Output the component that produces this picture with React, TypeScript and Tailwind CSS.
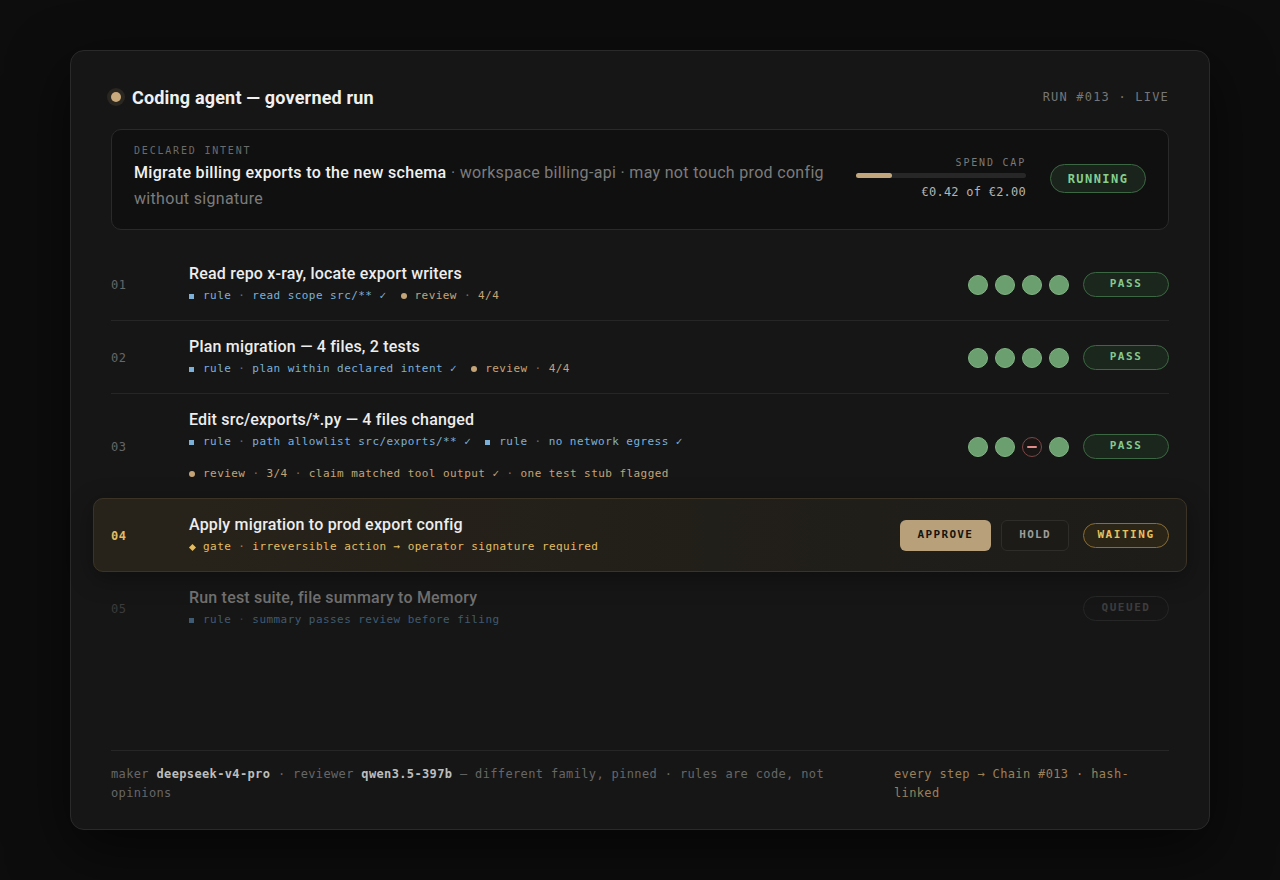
import React from "react";

type Check = "ok" | "flag";
type Tag = { kind: "rule" | "review" | "gate"; label: string; parts: string[] };
type Step = {
  n: string;
  title: string;
  tags: Tag[];
  status: "pass" | "waiting" | "queued";
  checks?: Check[];
};

const mono = "font-['DejaVu_Sans_Mono',monospace]";

const steps: Step[] = [
  {
    n: "01",
    title: "Read repo x-ray, locate export writers",
    tags: [
      { kind: "rule", label: "rule", parts: ["read scope src/** ✓"] },
      { kind: "review", label: "review", parts: ["4/4"] },
    ],
    status: "pass",
    checks: ["ok", "ok", "ok", "ok"],
  },
  {
    n: "02",
    title: "Plan migration — 4 files, 2 tests",
    tags: [
      { kind: "rule", label: "rule", parts: ["plan within declared intent ✓"] },
      { kind: "review", label: "review", parts: ["4/4"] },
    ],
    status: "pass",
    checks: ["ok", "ok", "ok", "ok"],
  },
  {
    n: "03",
    title: "Edit src/exports/*.py — 4 files changed",
    tags: [
      { kind: "rule", label: "rule", parts: ["path allowlist src/exports/** ✓"] },
      { kind: "rule", label: "rule", parts: ["no network egress ✓"] },
      {
        kind: "review",
        label: "review",
        parts: ["3/4", "claim matched tool output ✓", "one test stub flagged"],
      },
    ],
    status: "pass",
    checks: ["ok", "ok", "flag", "ok"],
  },
  {
    n: "04",
    title: "Apply migration to prod export config",
    tags: [
      {
        kind: "gate",
        label: "gate",
        parts: ["irreversible action → operator signature required"],
      },
    ],
    status: "waiting",
  },
  {
    n: "05",
    title: "Run test suite, file summary to Memory",
    tags: [{ kind: "rule", label: "rule", parts: ["summary passes review before filing"] }],
    status: "queued",
  },
];

const TagItem: React.FC<{ tag: Tag; dim?: boolean }> = ({ tag, dim }) => {
  const color =
    tag.kind === "rule"
      ? dim
        ? "text-[#3f5b73]"
        : "text-[#7cb0d8]"
      : tag.kind === "review"
        ? "text-[#c4a476]"
        : "text-[#e4bd62]";
  return (
    <span className={`inline-flex items-center whitespace-nowrap ${color}`}>
      {tag.kind === "rule" && <span className="mr-[9px] inline-block h-[5px] w-[5px] bg-current" />}
      {tag.kind === "review" && (
        <span className="mr-[8px] inline-block h-[6px] w-[6px] rounded-full bg-current" />
      )}
      {tag.kind === "gate" && (
        <span className="mr-[8px] ml-[1px] inline-block h-[5px] w-[5px] rotate-45 bg-current" />
      )}
      <span>{tag.label}</span>
      {tag.parts.map((p, i) => (
        <React.Fragment key={i}>
          <span className="px-[7px] opacity-60">·</span>
          <span>{p}</span>
        </React.Fragment>
      ))}
    </span>
  );
};

const Dot: React.FC<{ check: Check }> = ({ check }) =>
  check === "ok" ? (
    <span className="h-5 w-5 rounded-full border border-[#80b482] bg-[#6c9f6f]" />
  ) : (
    <span className="flex h-5 w-5 items-center justify-center rounded-full border border-[#7a4747] bg-[#1b1616]">
      <span className="h-[2px] w-[10px] rounded-full bg-[#e38c8c]" />
    </span>
  );

const Pill: React.FC<{ status: Step["status"] }> = ({ status }) => {
  const styles = {
    pass: "border-[#3b6842] bg-[#1b261d] text-[#86c98e]",
    waiting: "border-[#8a6d33] bg-[#2a2517] text-[#e8c15f]",
    queued: "border-[#262626] bg-transparent text-[#3d3d3d]",
  }[status];
  return (
    <span
      className={`${mono} flex h-[25px] w-[86px] items-center justify-center rounded-full border text-[11px] font-bold tracking-[0.14em] ${styles}`}
    >
      {status.toUpperCase()}
    </span>
  );
};

const StepRow: React.FC<{ step: Step; divider: boolean }> = ({ step, divider }) => {
  const active = step.status === "waiting";
  const queued = step.status === "queued";
  return (
    <div
      className={
        active
          ? "-mx-[18px] flex items-center rounded-[10px] border border-[#3b3426] bg-gradient-to-r from-[#28231a] to-[#1d1c19] px-[17px] pt-[16px] pb-[15px] shadow-[0_6px_24px_rgba(0,0,0,0.35)]"
          : `flex items-center pt-[16px] pb-[15px] ${divider ? "border-b border-[#262626]" : ""}`
      }
    >
      <div
        className={`${mono} w-[78px] shrink-0 text-[12px] tracking-[0.05em] ${
          active ? "font-bold text-[#e2bb62]" : queued ? "text-[#3b3b3b]" : "text-[#666]"
        }`}
      >
        {step.n}
      </div>
      <div className="min-w-0 flex-1">
        <div
          className={`text-[16px] leading-[20px] font-medium tracking-[0.012em] ${
            queued ? "text-[#6f6f6f]" : "text-[#ededed]"
          }`}
        >
          {step.title}
        </div>
        <div
          className={`${mono} mt-[3px] flex flex-wrap gap-x-[14px] gap-y-[14px] text-[11px] leading-[18px] tracking-[0.04em]`}
        >
          {step.tags.map((t, i) => (
            <TagItem key={i} tag={t} dim={queued} />
          ))}
        </div>
      </div>
      <div className="ml-6 flex shrink-0 items-center">
        {step.checks && (
          <div className="mr-[14px] flex gap-[7px]">
            {step.checks.map((c, i) => (
              <Dot key={i} check={c} />
            ))}
          </div>
        )}
        {active && (
          <div className={`${mono} mr-[14px] flex gap-[10px] text-[11px] font-bold tracking-[0.12em]`}>
            <button className="h-[31px] rounded-[6px] bg-[#b8a07a] px-[18px] text-[#17140f]">
              APPROVE
            </button>
            <button className="h-[31px] rounded-[6px] border border-[#2f2d29] bg-[#1c1b18] px-[17px] text-[#9b9b9b]">
              HOLD
            </button>
          </div>
        )}
        <Pill status={step.status} />
      </div>
    </div>
  );
};

export default function App() {
  return (
    <div className="flex h-[880px] items-center justify-center bg-[#0d0d0d] font-['Roboto',sans-serif]">
      <div className="flex h-[780px] w-[1140px] flex-col rounded-[14px] border border-[#2a2a2a] bg-[#161616] px-10 pt-[34px] pb-[26px] shadow-[0_20px_60px_rgba(0,0,0,0.6)]">
        {/* header */}
        <div className="flex h-6 items-center justify-between">
          <div className="flex items-center gap-[11px]">
            <span className="h-[10px] w-[10px] rounded-full bg-[#c9aa7c] shadow-[0_0_0_4px_#2a2620]" />
            <h1 className="text-[18px] font-bold tracking-[0.01em] text-[#f0f0f0]">Coding agent — governed run</h1>
          </div>
          <div className={`${mono} text-[12px] tracking-[0.1em] text-[#767676]`}>RUN #013 · LIVE</div>
        </div>

        {/* declared intent */}
        <div className="mt-5 flex items-center rounded-[10px] border border-[#2a2a2a] bg-[#101010] px-[22px] pt-[15px] pb-[17px]">
          <div className="min-w-0 flex-1 pr-5">
            <div className={`${mono} text-[10px] leading-[12px] tracking-[0.18em] text-[#6b6b6b]`}>
              DECLARED INTENT
            </div>
            <p className="mt-[3px] text-[16px] leading-[26px] tracking-[0.02em] text-[#7c7c7c]">
              <span className="font-medium text-[#f0f0f0]">Migrate billing exports to the new schema</span>{" "}
              · workspace billing-api · may not touch prod config without signature
            </p>
          </div>
          <div className="flex w-[170px] shrink-0 flex-col items-end">
            <div className={`${mono} text-[10px] leading-[12px] tracking-[0.18em] text-[#7a7a7a]`}>SPEND CAP</div>
            <div className="mt-[4px] h-[5px] w-full rounded-full bg-[#272727]">
              <div className="h-full rounded-full bg-[#c2a77c]" style={{ width: `${(0.42 / 2) * 100}%` }} />
            </div>
            <div className={`${mono} mt-[6px] text-[12px] leading-[16px] tracking-[0.02em] text-[#b4b4b4]`}>
              €0.42 of €2.00
            </div>
          </div>
          <span
            className={`${mono} ml-6 flex h-[29px] w-[96px] items-center justify-center rounded-full border border-[#3b6842] bg-[#1a241c] text-[12px] font-bold tracking-[0.12em] text-[#86cf8f]`}
          >
            RUNNING
          </span>
        </div>

        {/* steps */}
        <div className="mt-[18px] flex flex-col">
          {steps.map((s, i) => (
            <StepRow key={s.n} step={s} divider={i < 2} />
          ))}
        </div>

        {/* footer */}
        <div
          className={`${mono} mt-auto flex gap-[60px] border-t border-[#262626] pt-[14px] text-[12px] leading-[19px] tracking-[0.03em]`}
        >
          <p className="flex-1 text-[#676767]">
            maker <span className="font-bold text-[#bdbdbd]">deepseek-v4-pro</span> · reviewer{" "}
            <span className="font-bold text-[#bdbdbd]">qwen3.5-397b</span> — different family, pinned · rules are code,
            not opinions
          </p>
          <p className="w-[275px] shrink-0 text-[#9a8058]">every step → Chain #013 · hash-linked</p>
        </div>
      </div>
    </div>
  );
}
